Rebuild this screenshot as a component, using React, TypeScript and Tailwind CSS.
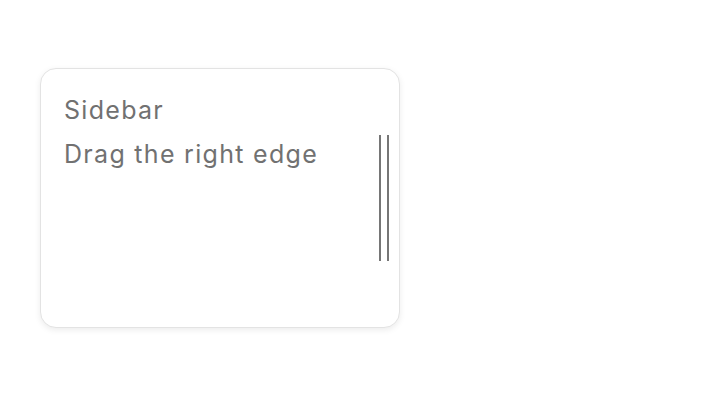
import React from "react";

export default function App() {
  return (
    <div className="w-[704px] h-[396px] bg-white pt-[68px] pl-[40px]" style={{ fontFamily: "Inter, 'Noto Sans', sans-serif" }}>
      <div className="relative w-[360px] h-[260px] rounded-[16px] border border-[#e3e3e3] bg-white shadow-[0_2px_6px_rgba(0,0,0,0.08)] px-[23px] pt-[19px]">
        <div className="text-[25px] leading-[44px] tracking-[1.3px] text-[#717171]">Sidebar</div>
        <div className="text-[25px] leading-[44px] tracking-[1.3px] text-[#717171]">Drag the right edge</div>
        <div className="absolute right-[10px] top-[66px] h-[126px] w-[10px] flex justify-between">
          <div className="w-[2px] h-full bg-[#767676]" />
          <div className="w-[2px] h-full bg-[#767676]" />
        </div>
      </div>
    </div>
  );
}
